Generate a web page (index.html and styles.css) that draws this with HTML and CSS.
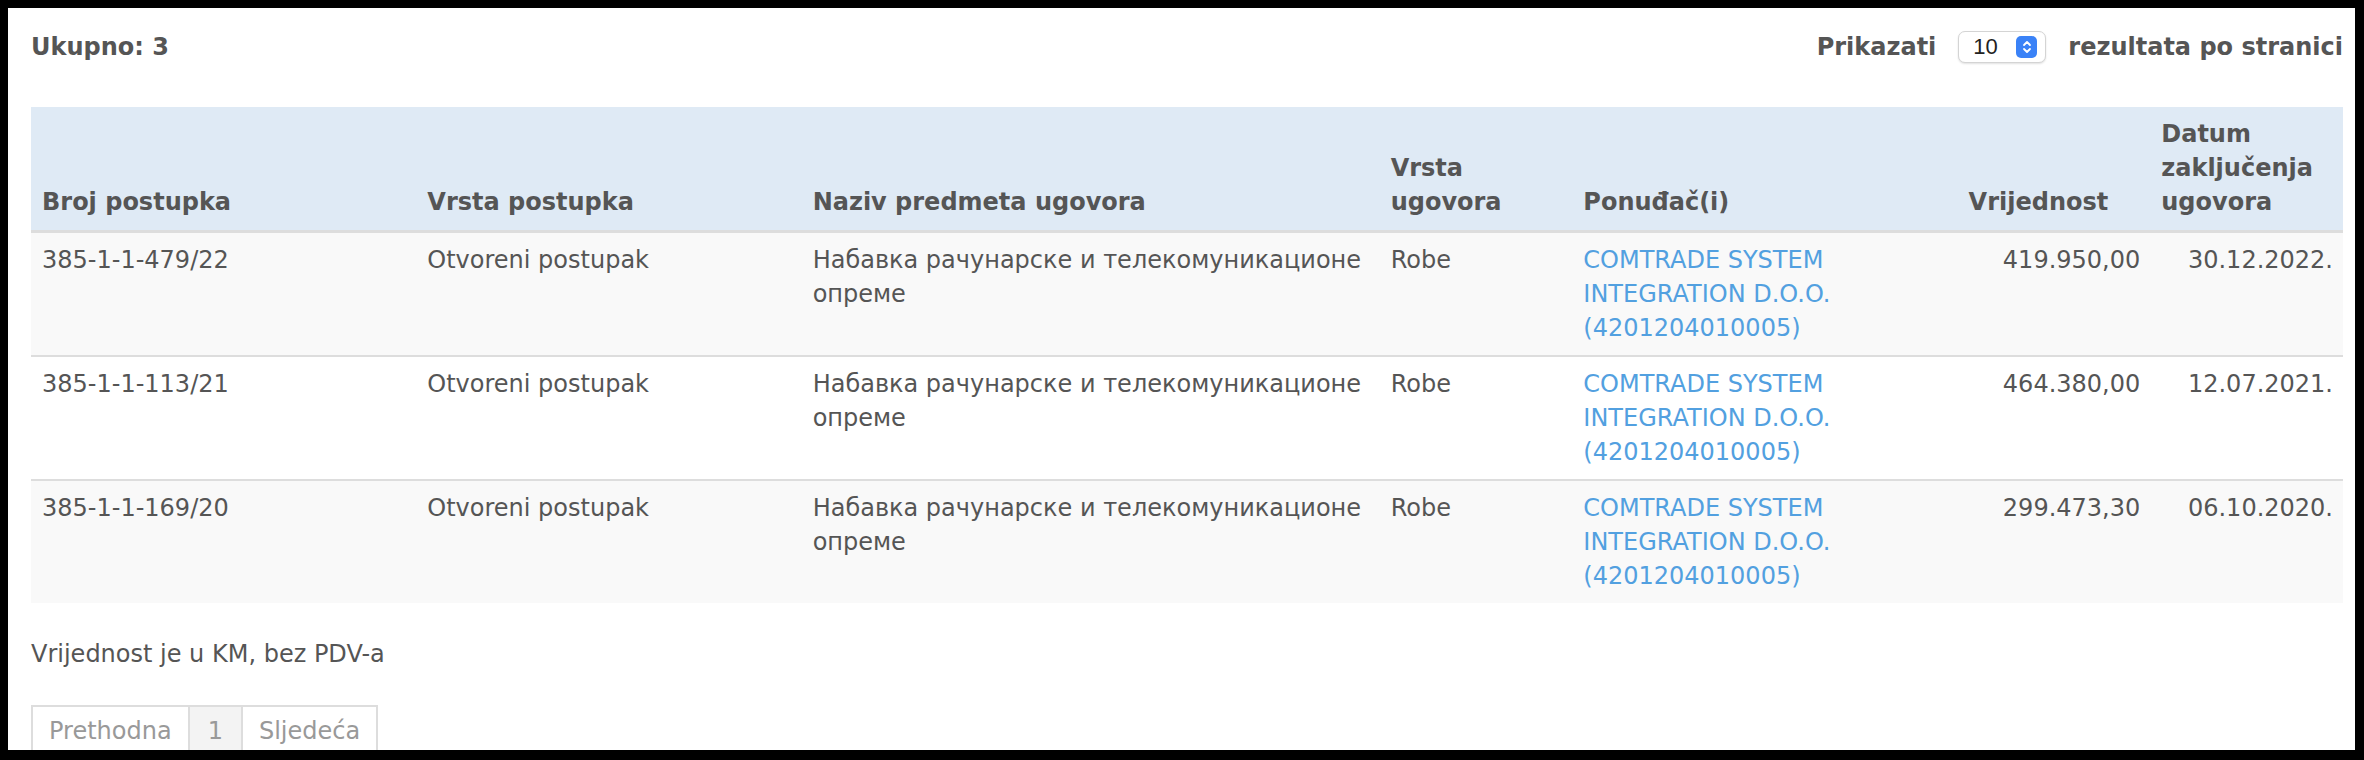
FILE: index.html
```html
<!DOCTYPE html>
<html lang="bs">
<head>
<meta charset="utf-8">
<title>Ugovori</title>
<link rel="stylesheet" href="styles.css">
</head>
<body>
<div class="frame">
  <div class="topbar">
    <div class="total">Ukupno: 3</div>
    <div class="perpage">
      <span class="label">Prikazati</span>
      <div class="select">
        <span class="select-value">10</span>
        <span class="stepper">
          <svg width="12" height="16" viewBox="0 0 12 16"><path d="M3 6 L6 3 L9 6 M3 10 L6 13 L9 10" fill="none" stroke="#fff" stroke-width="1.8" stroke-linecap="round" stroke-linejoin="round"/></svg>
        </span>
      </div>
      <span class="label">rezultata po stranici</span>
    </div>
  </div>

  <table class="grid">
    <colgroup>
      <col class="c2"><col class="c2"><col class="c3"><col class="c1"><col class="c2"><col class="c1"><col class="c1">
    </colgroup>
    <thead>
      <tr>
        <th>Broj postupka</th>
        <th>Vrsta postupka</th>
        <th>Naziv predmeta ugovora</th>
        <th>Vrsta ugovora</th>
        <th>Ponuđač(i)</th>
        <th>Vrijednost</th>
        <th>Datum zaključenja ugovora</th>
      </tr>
    </thead>
    <tbody>
      <tr>
        <td>385-1-1-479/22</td>
        <td>Otvoreni postupak</td>
        <td>Набавка рачунарске и телекомуникационе опреме</td>
        <td>Robe</td>
        <td><a href="#">COMTRADE SYSTEM INTEGRATION D.O.O. (4201204010005)</a></td>
        <td class="num">419.950,00</td>
        <td class="num">30.12.2022.</td>
      </tr>
      <tr>
        <td>385-1-1-113/21</td>
        <td>Otvoreni postupak</td>
        <td>Набавка рачунарске и телекомуникационе опреме</td>
        <td>Robe</td>
        <td><a href="#">COMTRADE SYSTEM INTEGRATION D.O.O. (4201204010005)</a></td>
        <td class="num">464.380,00</td>
        <td class="num">12.07.2021.</td>
      </tr>
      <tr>
        <td>385-1-1-169/20</td>
        <td>Otvoreni postupak</td>
        <td>Набавка рачунарске и телекомуникационе опреме</td>
        <td>Robe</td>
        <td><a href="#">COMTRADE SYSTEM INTEGRATION D.O.O. (4201204010005)</a></td>
        <td class="num">299.473,30</td>
        <td class="num">06.10.2020.</td>
      </tr>
    </tbody>
  </table>

  <p class="note">Vrijednost je u KM, bez PDV-a</p>

  <ul class="pagination">
    <li class="page disabled">Prethodna</li>
    <li class="page active">1</li>
    <li class="page disabled">Sljedeća</li>
  </ul>
</div>
</body>
</html>
```

FILE: styles.css
```css
html, body {
  margin: 0;
  padding: 0;
  background: #000;
}

body {
  padding: 8px 9px 10px 8px;
  font-family: "DejaVu Sans", Verdana, sans-serif;
  font-size: 24px;
  line-height: 34px;
  color: #555;
}

.frame {
  background: #fff;
  height: 742px;
  overflow: hidden;
  padding: 0 12px 0 23px;
  box-sizing: border-box;
}

.topbar {
  display: flex;
  justify-content: space-between;
  align-items: center;
  padding-top: 22px;
  height: 34px;
  margin-bottom: 43px;
}

.total {
  font-weight: bold;
}

.perpage {
  display: flex;
  align-items: center;
  gap: 22px;
}

.label {
  font-weight: bold;
}

.select {
  width: 88px;
  height: 32px;
  box-sizing: border-box;
  border: 1px solid #d4d4d4;
  border-radius: 7px;
  box-shadow: 0 1px 2px rgba(0, 0, 0, 0.12);
  display: flex;
  align-items: center;
  justify-content: space-between;
  padding: 0 8px 0 14px;
  background: #fff;
}

.select-value {
  font-family: "Liberation Sans", Arial, sans-serif;
  font-size: 22px;
  color: #222;
  line-height: 1;
}

.stepper {
  width: 21px;
  height: 22px;
  border-radius: 5px;
  background: #3a82f7;
  display: flex;
  align-items: center;
  justify-content: center;
}

.grid {
  width: 100%;
  border-collapse: collapse;
  margin-bottom: 34px;
}

.c1 { width: 8.333%; }
.c2 { width: 16.666%; }
.c3 { width: 25%; }

.grid th {
  background: #dfeaf5;
  font-weight: bold;
  text-align: left;
  vertical-align: bottom;
  padding: 10px 10px 11px 11px;
  border-bottom: 3px solid #ddd;
}

.grid td {
  vertical-align: top;
  padding: 10px 10px 10px 11px;
  border-top: 2px solid #ddd;
}

.grid tbody tr:nth-child(odd) td {
  background: #f9f9f9;
}

.grid td.num {
  text-align: right;
}

.grid a {
  color: #52a0e0;
  text-decoration: none;
}

.note {
  margin: 0;
  padding-left: 0;
}

.pagination {
  list-style: none;
  margin: 34px 0 0;
  padding: 0;
  display: flex;
}

.page {
  border: 2px solid #ddd;
  padding: 6px 16px 10px;
  line-height: 36px;
  color: #999;
  background: #fff;
}

.page + .page {
  margin-left: -2px;
}

.page.active {
  background: #f3f3f3;
  padding: 6px 18px 10px;
}
```
